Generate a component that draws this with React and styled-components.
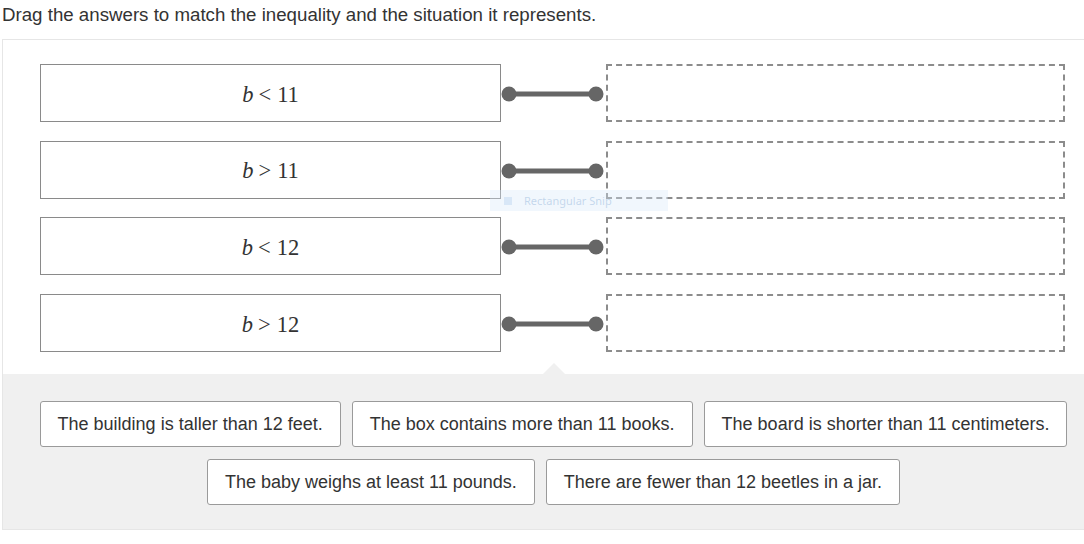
import React from "react";
import styled, { createGlobalStyle } from "styled-components";

const GlobalStyle = createGlobalStyle`
  html, body {
    margin: 0;
    padding: 0;
    background: #ffffff;
    overflow: hidden;
  }
  body {
    font-family: "Liberation Sans", Arial, sans-serif;
    color: #333333;
  }
`;

const pairs = [
  { op: "<", n: "11" },
  { op: ">", n: "11" },
  { op: "<", n: "12" },
  { op: ">", n: "12" },
];

const answers = [
  "The building is taller than 12 feet.",
  "The box contains more than 11 books.",
  "The board is shorter than 11 centimeters.",
  "The baby weighs at least 11 pounds.",
  "There are fewer than 12 beetles in a jar.",
];

const Connector = () => (
  <ConnectorSvg viewBox="0 0 105 58" width="105" height="58">
    <line x1="8" y1="30" x2="95" y2="30" stroke="#666666" strokeWidth="5" />
    <circle cx="8" cy="30" r="7.5" fill="#666666" />
    <circle cx="95" cy="30" r="7.5" fill="#666666" />
  </ConnectorSvg>
);

export default function App() {
  return (
    <>
      <GlobalStyle />
      <Page>
        <Title>Drag the answers to match the inequality and the situation it represents.</Title>
        <Panel>
          <MatchArea>
            {pairs.map((p, i) => (
              <Row key={i}>
                <TermBox>
                  <MathExpr>
                    <Var>b</Var>
                    <Op>{p.op}</Op>
                    <span>{p.n}</span>
                  </MathExpr>
                </TermBox>
                <Connector />
                <DropBox />
              </Row>
            ))}
            <SnipHint>
              <SnipIcon />
              Rectangular Snip
            </SnipHint>
          </MatchArea>
          <Tray>
            {answers.map((a) => (
              <Chip key={a}>{a}</Chip>
            ))}
          </Tray>
        </Panel>
      </Page>
    </>
  );
}

const Page = styled.div`
  padding-left: 2px;
  width: 1110px;
`;

const Title = styled.p`
  margin: 0;
  padding-top: 4px;
  height: 35px;
  font-size: 18.7px;
  line-height: 22px;
  color: #333333;
`;

const Panel = styled.div`
  width: 1103px;
  box-sizing: border-box;
  border: 1px solid #e6e6e6;
  background: #ffffff;
`;

const MatchArea = styled.div`
  position: relative;
  display: flex;
  flex-direction: column;
  gap: 18.7px;
  padding: 24px 0 22px 37px;
`;

const Row = styled.div`
  display: flex;
  align-items: center;
  height: 58px;
`;

const TermBox = styled.div`
  width: 461px;
  height: 58px;
  box-sizing: border-box;
  border: 1px solid #8a8a8a;
  background: #ffffff;
  display: flex;
  align-items: center;
  justify-content: center;
`;

const MathExpr = styled.span`
  font-family: "Liberation Serif", "Times New Roman", serif;
  font-size: 22.5px;
  color: #333333;
  padding-top: 3px;
`;

const Var = styled.i`
  font-style: italic;
`;

const Op = styled.span`
  margin: 0 6px 0 5px;
`;

const ConnectorSvg = styled.svg`
  display: block;
  flex-shrink: 0;
`;

const DropBox = styled.div`
  width: 459px;
  height: 58px;
  box-sizing: border-box;
  border: 2px dashed #8c8c8c;
  background: #ffffff;
`;

const SnipHint = styled.div`
  position: absolute;
  left: 487px;
  top: 150px;
  width: 178px;
  height: 21px;
  display: flex;
  align-items: center;
  gap: 12px;
  padding-left: 14px;
  box-sizing: border-box;
  background: rgba(215, 232, 250, 0.35);
  color: rgba(140, 175, 215, 0.45);
  font-family: "Noto Sans", sans-serif;
  font-size: 11px;
  pointer-events: none;
`;

const SnipIcon = styled.span`
  width: 8px;
  height: 8px;
  background: rgba(170, 200, 235, 0.35);
`;

const Tray = styled.div`
  position: relative;
  background: #f0f0f0;
  display: flex;
  flex-wrap: wrap;
  justify-content: center;
  gap: 12px 11px;
  padding: 27px 20px 24px;

  &::before {
    content: "";
    position: absolute;
    top: -11px;
    left: 540px;
    border-left: 11px solid transparent;
    border-right: 11px solid transparent;
    border-bottom: 11px solid #f0f0f0;
  }
`;

const Chip = styled.div`
  height: 46px;
  box-sizing: border-box;
  padding: 0 17px;
  display: flex;
  align-items: center;
  background: #ffffff;
  border: 1px solid #9a9a9a;
  border-radius: 3px;
  font-size: 18px;
  color: #333333;
  white-space: nowrap;
`;
